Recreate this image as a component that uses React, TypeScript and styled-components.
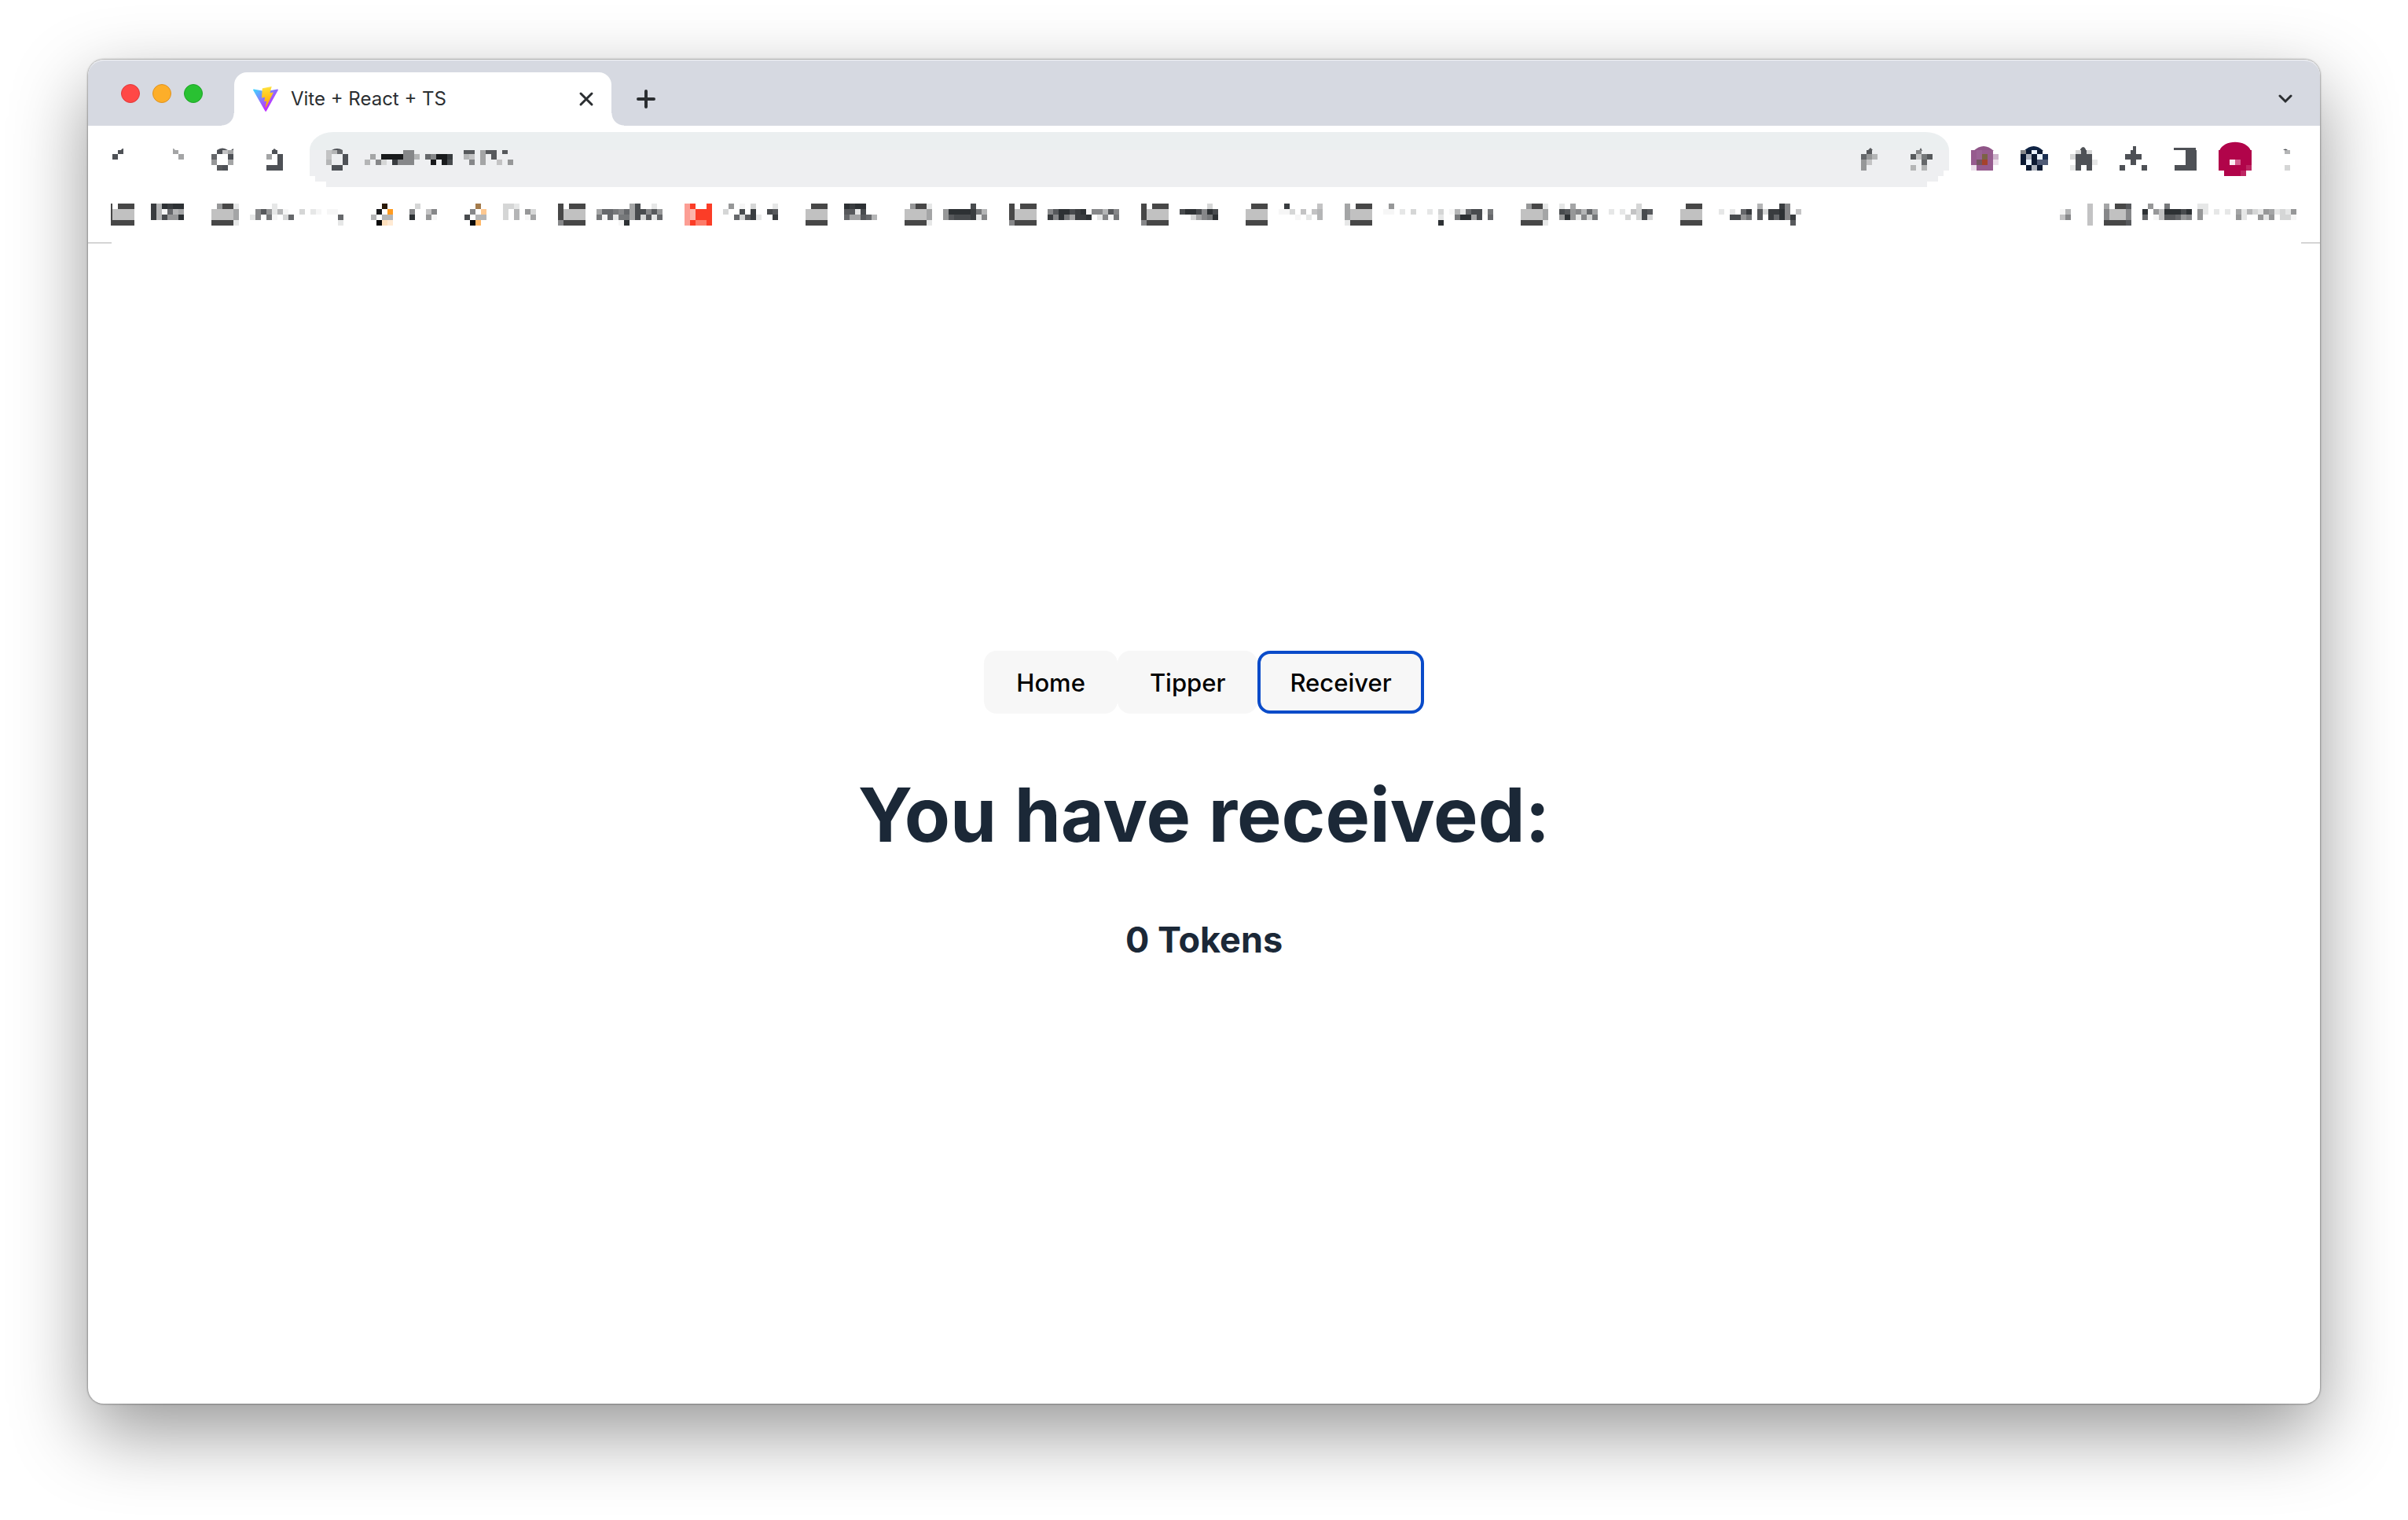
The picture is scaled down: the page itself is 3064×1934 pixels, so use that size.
import React from 'react';
import styled, { createGlobalStyle } from 'styled-components';

const GlobalStyle = createGlobalStyle`
  *, *::before, *::after { box-sizing: border-box; }
  body { margin: 0; background: #fff; font-family: Inter, 'Liberation Sans', sans-serif; }
  button { font: inherit; border: 0; padding: 0; background: none; cursor: pointer; }
`;

/* ---------- mosaic glyphs ---------- */

const CELL = 7;

const PALETTE: Record<string, string> = {
  '0': '#0a0a0a', '1': '#191a1c', '2': '#2d3134', '3': '#393c3f',
  '4': '#484b4e', '5': '#57595c', '6': '#66686b', '7': '#76787a',
  '8': '#868789', '9': '#969798', a: '#a4a5a6', b: '#b4b5b6',
  c: '#c3c3c4', d: '#d5d6d6', e: '#e6e7e7', f: '#f6f6f6',
  F: '#474747', G: '#c1c1c1', S: '#474747', D: '#4e5156',
  p: '#fc9e94', q: '#fdb5aa', R: '#fb3d27', t: '#fd7b69',
  B: '#2a1a08', O: '#ff9b21', y: '#fde0bd', z: '#ffead3',
  N: '#a47b4b', P: '#fec890', Q: '#ffb869',
  v: '#965b8e', V: '#9a6394', o: '#7b6245', m: '#735560', r: '#a5422c', l: '#cdb2ca', L: '#ecdfea',
  n: '#0b1a33', W: '#eaf3ff', M: '#1b3052', T: '#4f5b76', U: '#acb2bd',
  k: '#b1044a', x: '#bd2662', X: '#d35f8f', w: '#fbeef3',
};

interface CellsProps {
  rows: string[];
  top?: number;
  clip?: number;
}

function Cells({ rows, top = 0, clip = 0 }: CellsProps) {
  return (
    <>
      {rows.flatMap((row, r) =>
        row.split('').map((ch, c) => {
          if (ch === '.') return null;
          const cut = r === 0 ? clip : 0;
          const inset = ch === 'S' ? 5 : 0;
          return (
            <rect
              key={`${r}-${c}`}
              x={c * CELL + inset}
              y={top + r * CELL + cut}
              width={CELL - inset}
              height={CELL - cut}
              fill={PALETTE[ch]}
            />
          );
        }),
      )}
    </>
  );
}

const Glyph = styled.svg`
  display: block;
  flex: none;
  shape-rendering: crispEdges;
  path, circle { shape-rendering: auto; }
`;

function Mosaic({ rows }: { rows: string[] }) {
  const w = rows[0].length * CELL;
  const h = 4 * CELL;
  return (
    <Glyph width={w} height={h} viewBox={`0 0 ${w} ${h}`} aria-hidden="true">
      <Cells rows={rows} />
    </Glyph>
  );
}

function ToolGlyph({ rows, children }: { rows: string[]; children?: React.ReactNode }) {
  const w = rows[0].length * CELL;
  return (
    <Glyph width={w} height={70} viewBox={`0 0 ${w} 70`} aria-hidden="true">
      {children}
      <Cells rows={rows} top={21} clip={2} />
    </Glyph>
  );
}

/* ---------- window ---------- */

const Desktop = styled.div`
  display: flex;
  min-height: 100vh;
  padding: 76px 112px 148px;
  background: #fff;
  overflow: hidden;
`;

const Window = styled.div`
  flex: 1;
  min-width: 0;
  display: flex;
  flex-direction: column;
  background: #fff;
  border-radius: 20px;
  box-shadow: 0 0 2px 1px rgba(0, 0, 0, 0.3), 0 36px 96px rgba(0, 0, 0, 0.41);
`;

const TabStrip = styled.div`
  display: flex;
  align-items: flex-end;
  height: 84px;
  padding-right: 35px;
  background: #d6d9e1;
  border-radius: 20px 20px 0 0;
  box-shadow: inset 0 2px 1px -1px #f4f5f8;
`;

const Lights = styled.div`
  display: flex;
  align-self: center;
  gap: 16px;
  padding: 2px 40px 0 42px;
`;

const Light = styled.button<{ $fill: string; $edge: string }>`
  width: 24px;
  height: 24px;
  border-radius: 50%;
  background: ${(p) => p.$fill};
  border: 1px solid ${(p) => p.$edge};
`;

const Tab = styled.div`
  position: relative;
  display: flex;
  align-items: center;
  width: 480px;
  height: 68px;
  padding: 0 20px 0 24px;
  background: #fff;
  border-radius: 16px 16px 0 0;

  &::before, &::after {
    content: '';
    position: absolute;
    bottom: 0;
    width: 16px;
    height: 16px;
  }
  &::before {
    right: 100%;
    background: radial-gradient(circle at 0 0, transparent 15px, #fff 16px);
  }
  &::after {
    left: 100%;
    background: radial-gradient(circle at 100% 0, transparent 15px, #fff 16px);
  }
`;

const TabTitle = styled.span`
  flex: 1;
  margin-left: 16px;
  font-size: 24px;
  line-height: 32px;
  color: #2b2e31;
  white-space: nowrap;
`;

const IconButton = styled.button`
  display: grid;
  place-items: center;
  width: 24px;
  height: 68px;
`;

const NewTab = styled(IconButton)`
  margin-left: 32px;
`;

const TabSearch = styled(IconButton)`
  margin-left: auto;
  width: 18px;
`;

function ViteLogo() {
  return (
    <svg width="32" height="32" viewBox="0 0 256 257" aria-hidden="true">
      <defs>
        <linearGradient id="viteBody" x1="-.828%" x2="57.636%" y1="7.652%" y2="78.411%">
          <stop offset="0%" stopColor="#41D1FF" />
          <stop offset="100%" stopColor="#BD34FE" />
        </linearGradient>
        <linearGradient id="viteBolt" x1="43.376%" x2="50.316%" y1="2.242%" y2="89.03%">
          <stop offset="0%" stopColor="#FFEA83" />
          <stop offset="8.333%" stopColor="#FFDD35" />
          <stop offset="100%" stopColor="#FFA800" />
        </linearGradient>
      </defs>
      <path fill="url(#viteBody)" d="M255.153 37.938L134.897 252.976c-2.483 4.44-8.862 4.466-11.382.048L.875 37.958c-2.746-4.814 1.371-10.646 6.827-9.67l120.385 21.517a6.537 6.537 0 0 0 2.322-.004l117.867-21.483c5.438-.991 9.574 4.796 6.877 9.62Z" />
      <path fill="url(#viteBolt)" d="M185.432.063L96.44 17.501a3.268 3.268 0 0 0-2.634 3.014l-5.474 92.456a3.268 3.268 0 0 0 3.997 3.378l24.777-5.718c2.318-.535 4.413 1.507 3.936 3.838l-7.361 36.047c-.495 2.426 1.782 4.5 4.151 3.78l15.304-4.649c2.372-.72 4.652 1.36 4.15 3.788l-11.698 56.621c-.732 3.542 3.979 5.473 5.943 2.437l1.313-2.028l72.516-144.72c1.215-2.423-.88-5.186-3.54-4.672l-25.505 4.922c-2.396.462-4.435-1.77-3.759-4.114l16.646-57.705c.677-2.35-1.37-4.583-3.769-4.113Z" />
    </svg>
  );
}

/* ---------- toolbar ---------- */

const Toolbar = styled.div`
  display: flex;
  gap: 28px;
  padding: 8px 24px;
`;

const ToolButton = styled.button`
  display: block;
  flex: none;
`;

const AddressBar = styled.div`
  flex: 1;
  display: flex;
  gap: 21px;
  height: 70px;
  margin-left: 6px;
  padding: 0 21px;
  border-radius: 30px 30px 0 0 / 23px 23px 0 0;
  background: linear-gradient(#ebeff0 23px, #eeeff1 23px);
  clip-path: polygon(
    0 0, 100% 0, 100% 49px, calc(100% - 7px) 49px, calc(100% - 7px) 56px,
    calc(100% - 14px) 56px, calc(100% - 14px) 63px, calc(100% - 28px) 63px,
    calc(100% - 28px) 100%, 21px 100%, 21px 63px, 7px 63px, 7px 56px, 0 56px
  );
`;

const AddressActions = styled.div`
  display: flex;
  gap: 42px;
  margin-left: auto;
`;

/* ---------- bookmarks ---------- */

const BookmarkBar = styled.div`
  display: flex;
  gap: 28px;
  padding: 13px 30px 21px 24px;
`;

const Bookmark = styled.a`
  display: flex;
  gap: 14px;
`;

const Overflow = styled.div`
  display: flex;
  gap: 14px;
  margin-left: auto;
`;

const OverflowButton = styled.button`
  margin-right: 7px;
`;

const Divider = styled.div`
  display: flex;
  justify-content: space-between;
  height: 2px;
`;

const DividerEnd = styled.span<{ $width: number }>`
  width: ${(p) => p.$width}px;
  background: #d5d5d5;
`;

const FOLDER_A = ['F.FFF', 'FGGGG', 'FGGGG', '8FFFF'];
const FOLDER_B = ['.9FFe', 'GGGGa', 'GGGGa', 'FFFFe'];
const FOLDER_C = ['..FFF', '.GGGG', '.GGGG', '.FFFF'];

const BOOKMARKS: { icon: string[]; label: string[] }[] = [
  { icon: ['S.FFF', 'SGGGG', 'SGGGG', 'SFFFF'], label: ['.3b2322.', '.3bf6ba.', '.3b4992.'] },
  { icon: FOLDER_B, label: ['....e............', '.859ebf..d.ef.ff.', 'e8.7f.d6........6', '................e'] },
  { icon: ['...B.', '..1.O', '.b.bb', '..0yz'], label: ['..d...', '.8..c8', '.2..9f'] },
  { icon: ['...N.', '..8.P', '.4.bb', '..0Q.'], label: ['.dde...', '.d.b.9d', '.d.b.fa'] },
  { icon: FOLDER_A, label: ['......a4..e.', 'a66786a44859', '7f6e77a4d5e6', '....f2......'] },
  { icon: ['pR..R', 'pqRRR', 'pqRRR', 'pRttR'], label: ['.9.f.d...e', 'd..4.3..45', '..6d53e..3'] },
  { icon: FOLDER_C, label: ['.2322...', '.55e4...', '.6aa56b.'] },
  { icon: FOLDER_B, label: ['.....4..', '9222237b', '954443e8'] },
  { icon: FOLDER_A, label: ['.............', '8522432f88b58', '3827a332.e8f7'] },
  { icon: FOLDER_A, label: ['.....d.', '4224824', '..da872'] },
  { icon: FOLDER_C, label: ['.3.....c', 'ffd.c.cb', '...f.e.b'] },
  { icon: ['a.FFF', 'aGGGG', 'aGGGG', 'eFFFF'], label: ['.9...................', 'ff.e.d..e.d.fbe644f7.', '..........e..722a4.6.', '..........2..........'] },
  { icon: FOLDER_B, label: ['e.a...........d..', '4598b6a..e.e.cd45', '929e8d7.....d.d4d'] },
  { icon: FOLDER_C, label: ['........b...38..', '.e.e.63.5d3328.c', '...4497.5.36283.', '..............5.'] },
];

/* ---------- page ---------- */

const Page = styled.main`
  flex: 1;
  display: flex;
  flex-direction: column;
  align-items: center;
  justify-content: center;
  padding-bottom: 44px;
  color: #1b2837;
`;

const Nav = styled.nav`
  display: flex;
`;

const NavButton = styled.button<{ $active?: boolean }>`
  height: 80px;
  padding: 2px 37px 0;
  border: 4px solid ${(p) => (p.$active ? '#0a4bc9' : 'transparent')};
  border-radius: 16px;
  background: #f7f7f7;
  font-size: 31px;
  font-weight: 500;
  line-height: 40px;
  color: #000;
`;

const Heading = styled.h1`
  margin: 73px 0 74px;
  font-size: 95px;
  font-weight: 700;
  line-height: 112px;
  white-space: nowrap;
`;

const Amount = styled.h2`
  margin: 0;
  font-size: 45px;
  font-weight: 700;
  line-height: 58px;
`;

export default function App() {
  return (
    <>
      <GlobalStyle />
      <Desktop>
        <Window>
          <TabStrip>
            <Lights>
              <Light aria-label="Close" $fill="#ff4846" $edge="#e0383a" />
              <Light aria-label="Minimize" $fill="#fdae29" $edge="#df9320" />
              <Light aria-label="Zoom" $fill="#29c132" $edge="#1da526" />
            </Lights>
            <Tab>
              <ViteLogo />
              <TabTitle>Vite + React + TS</TabTitle>
              <IconButton aria-label="Close tab">
                <svg width="22" height="22" viewBox="0 0 22 22" stroke="#2b2e31" strokeWidth="3" strokeLinecap="round">
                  <path d="M4 4 18 18M18 4 4 18" />
                </svg>
              </IconButton>
            </Tab>
            <NewTab aria-label="New tab">
              <svg width="24" height="24" viewBox="0 0 24 24" stroke="#2b2e31" strokeWidth="4" strokeLinecap="round">
                <path d="M12 2V22M2 12H22" />
              </svg>
            </NewTab>
            <TabSearch aria-label="Search tabs">
              <svg width="18" height="12" viewBox="0 0 18 12" fill="none" stroke="#2b2e31" strokeWidth="3" strokeLinecap="round">
                <path d="M2 2 9 9 16 2" />
              </svg>
            </TabSearch>
          </TabStrip>

          <Toolbar>
            <ToolButton aria-label="Back">
              <ToolGlyph rows={['..D..', '.D...']}>
                <path d="M14 26 20 21H21V26Z" fill="#4e5156" />
              </ToolGlyph>
            </ToolButton>
            <ToolButton aria-label="Forward">
              <ToolGlyph rows={['...a.', '....a']}>
                <path d="M21 26V21H22L27 26Z" fill="#a4a5a6" />
              </ToolGlyph>
            </ToolButton>
            <ToolButton aria-label="Reload">
              <ToolGlyph rows={['..Dca', '.6..D', '.9..a', '..5D.']}>
                <path d="M14 23Q21 18 28 23ZM32 23 35 21V23Z" fill="#4e5156" />
              </ToolGlyph>
            </ToolButton>
            <ToolButton aria-label="Home">
              <ToolGlyph rows={['...D.', '..a.D', '....D', '..DDD']}>
                <path d="M21 24 24 21 28 24Z" fill="#4e5156" />
              </ToolGlyph>
            </ToolButton>

            <AddressBar>
              <ToolButton aria-label="Site information">
                <ToolGlyph rows={['cb6.', 'c..D', 'b..D', '.DD.']}>
                  <path d="M7 23Q14 19 21 23Z" fill="#4e5156" />
                </ToolGlyph>
              </ToolButton>
              <ToolGlyph
                rows={[
                  '.......88.........55.a55.5.',
                  '.a.111188b.68113..bc.a.5...',
                  'b.8d.3888...1.14...8.a..c.9',
                ]}
              />
              <AddressActions>
                <ToolButton aria-label="Share">
                  <ToolGlyph rows={['.5.', '69b', '9c.', '9..']}>
                    <path d="M8 24 12 20 15 23Z" fill="#57595c" />
                  </ToolGlyph>
                </ToolButton>
                <ToolButton aria-label="Bookmark this tab">
                  <ToolGlyph rows={['.8..', '5c75', '..6.', 'b.b.']}>
                    <path d="M11 24 13 20 15 24Z" fill="#57595c" />
                  </ToolGlyph>
                </ToolButton>
              </AddressActions>
            </AddressBar>

            <ToolButton aria-label="Violet extension">
              <ToolGlyph rows={['vVvv.', 'vVovl', 'vmrvL', 'Lvvv.']}>
                <path d="M3 24Q16 12 29 24Z" fill="#8f5587" />
              </ToolGlyph>
            </ToolButton>
            <ToolButton aria-label="Navy extension">
              <ToolGlyph rows={['8nWn.', 'nUnWM', 'nWnTT', '.nUn.']}>
                <path d="M4 24Q17 12 29 24Z" fill="#0f2344" />
              </ToolGlyph>
            </ToolButton>
            <ToolButton aria-label="Extensions">
              <ToolGlyph rows={['.dDd.', 'dDDD.', '.DDDe', 'eD.D.']}>
                <path d="M13 24V22Q17 16 20 22V24Z" fill="#4e5156" />
              </ToolGlyph>
            </ToolButton>
            <ToolButton aria-label="Labs">
              <ToolGlyph rows={['..D..', '.DDD.', '..D..', 'D...D']}>
                <path d="M17 18H21V24H17Z" fill="#4e5156" />
              </ToolGlyph>
            </ToolButton>
            <ToolButton aria-label="Side panel">
              <ToolGlyph rows={['...DD', '...DD', '...DD', '.DDDD']}>
                <path d="M6 20H34V23H6Z" fill="#4e5156" />
              </ToolGlyph>
            </ToolButton>
            <ToolButton aria-label="Profile">
              <ToolGlyph rows={['kkkkkk', 'kkkkkk', 'kkwXkk', 'kkkkkx', '.kkkx.']}>
                <path d="M1 24C6 9 36 9 41 24Z" fill="#b1044a" />
              </ToolGlyph>
            </ToolButton>
            <ToolButton aria-label="Menu">
              <ToolGlyph rows={['..b..', '.....', '.....', '..d..']}>
                <path d="M12 23Q15 20 18 23Z" fill="#4e5156" />
              </ToolGlyph>
            </ToolButton>
          </Toolbar>

          <BookmarkBar>
            {BOOKMARKS.map((b, i) => (
              <Bookmark key={i} href="#">
                <Mosaic rows={b.icon} />
                <Mosaic rows={b.label} />
              </Bookmark>
            ))}
            <Overflow>
              <OverflowButton aria-label="More bookmarks">
                <Mosaic rows={['..', 'fb', 'c8']} />
              </OverflowButton>
              <Mosaic rows={['c', 'c', 'c', 'c']} />
              <Bookmark href="#">
                <Mosaic rows={['a.FF5', '8GGG8', '8GGG8', 'FFFF5']} />
                <Mosaic
                  rows={[
                    '.9..7.....ee................',
                    '2.9c22242.9e.e.e.aebde9aede9',
                    '6.fc55698.9......9e..9e9.ddf',
                  ]}
                />
              </Bookmark>
            </Overflow>
          </BookmarkBar>
          <Divider>
            <DividerEnd $width={30} />
            <DividerEnd $width={24} />
          </Divider>

          <Page>
            <Nav>
              <NavButton>Home</NavButton>
              <NavButton>Tipper</NavButton>
              <NavButton $active>Receiver</NavButton>
            </Nav>
            <Heading>You have received:</Heading>
            <Amount>0 Tokens</Amount>
          </Page>
        </Window>
      </Desktop>
    </>
  );
}
